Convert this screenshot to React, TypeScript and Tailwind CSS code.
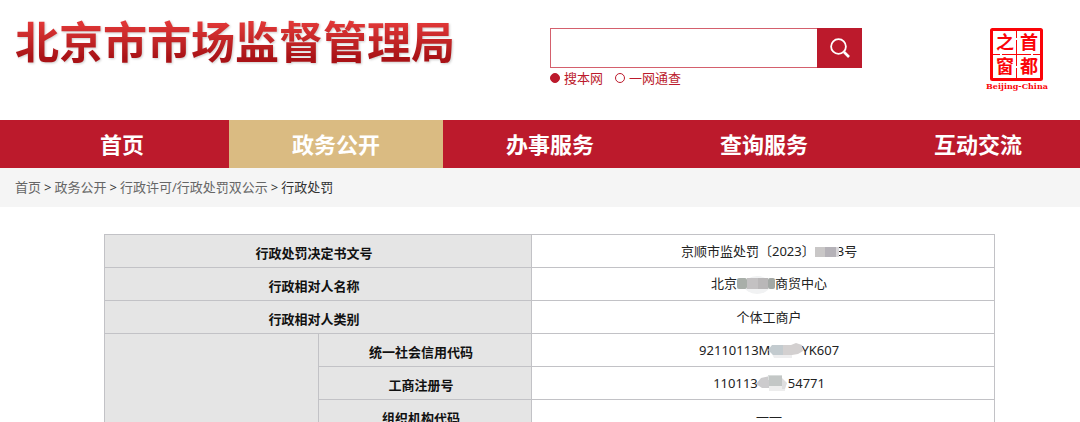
import { useState } from 'react';

const navItems = ['首页', '政务公开', '办事服务', '查询服务', '互动交流'];
const crumbs = ['首页', '政务公开', '行政许可/行政处罚双公示'];

function SearchIcon() {
  return (
    <svg viewBox="0 0 20 20" className="size-5" fill="none" stroke="currentColor" strokeWidth="1.8" aria-hidden="true">
      <circle cx="8.5" cy="8.5" r="7.4" />
      <path d="M14 14l5 5" strokeWidth="2.6" />
    </svg>
  );
}

function CapitalWindowLogo() {
  return (
    <svg
      width="62"
      height="66"
      viewBox="0 0 62 66"
      fill="#fb0408"
      className="overflow-visible"
      role="img"
      aria-label="首都之窗 Beijing-China"
    >
      <rect x="5.5" y="3.5" width="50" height="50" rx="1" fill="none" stroke="#fb0408" strokeWidth="3" />
      <path
        d="M30.5 5v7M30.5 14v26M30.5 42v10M7 28.5h7M16 28.5h29M47 28.5h7"
        fill="none"
        stroke="#fb0408"
        strokeWidth="1"
      />
      <g className="font-['Noto_Sans_CJK_SC',sans-serif]" fontSize="18" fontWeight="700" textAnchor="middle">
        <text x="19" y="23">之</text>
        <text x="43" y="23">首</text>
        <text x="19" y="47">窗</text>
        <text x="43" y="47">都</text>
      </g>
      <text x="31" y="63" fontSize="8" fontWeight="700" textAnchor="middle" className="font-['DejaVu_Serif',serif]">
        Beijing-China
      </text>
    </svg>
  );
}

function MaskNumber() {
  return (
    <svg width="24" height="12" className="relative -mr-[2px] inline-block align-[-2px]" aria-hidden="true">
      <rect y="1" width="10" height="10" fill="#c9c7c7" />
      <rect x="10" y="1" width="11" height="10" fill="#b5b2b8" />
      <rect x="21" y="1" width="3" height="10" fill="#d9d7da" />
    </svg>
  );
}

function MaskName() {
  return (
    <svg width="38" height="20" className="relative inline-block align-middle" aria-hidden="true">
      <ellipse cx="20" cy="10" rx="13" ry="9" fill="#f1f2f3" />
      <rect y="3" width="10" height="11" rx="2" fill="#a9afa9" />
      <rect x="10" y="3" width="11" height="11" fill="#c3c1c2" />
      <rect x="21" y="3" width="10" height="11" fill="#b9b7b8" />
      <rect x="31" y="3" width="7" height="11" rx="2" fill="#a3a8a5" />
    </svg>
  );
}

function MaskCode() {
  return (
    <svg width="35" height="16" className="relative -mx-[2px] inline-block align-[-4px]" aria-hidden="true">
      <path d="M4 11h20v4H6z" fill="#eeeeef" />
      <path d="M0 7l4-5h12v10H5z" fill="#c3cbcf" />
      <path d="M15 2h8l5-2 6 2 1 6-5 3-6 1h-9z" fill="#d3d0d0" />
    </svg>
  );
}

function MaskRegistration() {
  return (
    <svg width="32" height="17" className="relative -ml-[2px] inline-block align-[-4px]" aria-hidden="true">
      <path d="M0 9l5-6 9-2v12H6z" fill="#cccbcd" />
      <path d="M12 0h14v5H12z" fill="#d9dddc" />
      <path d="M13 11h16v5H13z" fill="#ededed" />
      <path d="M26 3l5 5-2 6h-3z" fill="#dededf" />
      <path d="M13 1h13v10H13z" fill="#c3c7c6" />
    </svg>
  );
}

function LabelCell({ children, span = 1 }: { children: string; span?: number }) {
  return (
    <th scope="row" colSpan={span} className="border border-[#c2c2c6] bg-[#e5e5e5] p-0 pt-1 pr-2 font-bold text-[#111]">
      {children}
    </th>
  );
}

function ValueCell({ children }: { children: React.ReactNode }) {
  return <td className="border border-[#c2c2c6] p-0 pl-3">{children}</td>;
}

export default function App() {
  const [scope, setScope] = useState('site');
  const radio =
    'size-[10px] appearance-none rounded-full border border-[#bc1a2c] checked:bg-[#bc1a2c]';

  return (
    <div className="h-screen overflow-hidden bg-white font-['Noto_Sans','Noto_Sans_CJK_SC',sans-serif] text-[#222]">
      <header className="flex h-[120px] items-start pl-[15px]">
        <h1 className="w-[535px] shrink-0 bg-linear-to-b from-[#e23838] from-30% to-[#a91216] to-80% bg-clip-text pt-2 font-['Noto_Sans_CJK_SC',sans-serif] text-[44px] leading-[64px] font-bold whitespace-nowrap text-transparent drop-shadow-[1px_1px_1px_rgba(0,0,0,0.2)]">
          北京市市场监督管理局
        </h1>
        <form className="w-[312px] shrink-0 pt-7" onSubmit={(e) => e.preventDefault()}>
          <div className="flex h-10">
            <input
              type="text"
              aria-label="搜索"
              className="min-w-0 flex-1 border border-r-0 border-[#d4606d] px-2 text-sm outline-none"
            />
            <button
              type="submit"
              aria-label="搜索"
              className="flex w-[45px] items-center justify-center bg-[#bc1a2c] text-white"
            >
              <SearchIcon />
            </button>
          </div>
          <div className="flex gap-3 text-[13px] leading-5 text-[#bc1a2c]">
            <label className="flex items-center gap-1">
              <input
                type="radio"
                name="scope"
                className={radio}
                checked={scope === 'site'}
                onChange={() => setScope('site')}
              />
              搜本网
            </label>
            <label className="flex items-center gap-1">
              <input
                type="radio"
                name="scope"
                className={radio}
                checked={scope === 'all'}
                onChange={() => setScope('all')}
              />
              一网通查
            </label>
          </div>
        </form>
        <div className="mr-8 ml-auto pt-[26px]">
          <CapitalWindowLogo />
        </div>
      </header>

      <nav className="flex h-12 overflow-hidden bg-[#bc1a2c] pl-[15px]">
        {navItems.map((item) => (
          <a
            key={item}
            href="#"
            className={`flex shrink-0 grow basis-[214px] items-center justify-center text-[22px] font-bold text-white ${
              item === '政务公开' ? 'bg-[#dabb82]' : ''
            }`}
          >
            {item}
          </a>
        ))}
      </nav>

      <div className="flex h-[39px] items-center gap-[3px] bg-[#f5f5f5] pl-[15px] text-[13px] text-[#666]">
        {crumbs.map((crumb) => (
          <span key={crumb} className="flex gap-[3px]">
            <a href="#">{crumb}</a>
            <span className="text-[#333]">&gt;</span>
          </span>
        ))}
        <span className="text-[#333]">行政处罚</span>
      </div>

      <main className="pt-[27px] pr-[85px] pl-[104px]">
        <table className="w-full table-fixed border-collapse text-center text-[13px] leading-5">
          <colgroup>
            <col className="w-[24%]" />
            <col className="w-[24%]" />
            <col />
          </colgroup>
          <tbody>
            <tr className="h-[33px]">
              <LabelCell span={2}>行政处罚决定书文号</LabelCell>
              <ValueCell>
                京顺市监处罚〔2023〕
                <MaskNumber />
                3号
              </ValueCell>
            </tr>
            <tr className="h-[33px]">
              <LabelCell span={2}>行政相对人名称</LabelCell>
              <ValueCell>
                北京
                <MaskName />
                商贸中心
              </ValueCell>
            </tr>
            <tr className="h-[33px]">
              <LabelCell span={2}>行政相对人类别</LabelCell>
              <ValueCell>个体工商户</ValueCell>
            </tr>
            <tr className="h-[33px]">
              <td rowSpan={3} className="border border-[#c2c2c6] bg-[#e5e5e5]" />
              <LabelCell>统一社会信用代码</LabelCell>
              <ValueCell>
                92110113M
                <MaskCode />
                YK607
              </ValueCell>
            </tr>
            <tr className="h-[33px]">
              <LabelCell>工商注册号</LabelCell>
              <ValueCell>
                110113
                <MaskRegistration />
                54771
              </ValueCell>
            </tr>
            <tr className="h-[33px]">
              <LabelCell>组织机构代码</LabelCell>
              <ValueCell>——</ValueCell>
            </tr>
          </tbody>
        </table>
      </main>
    </div>
  );
}
